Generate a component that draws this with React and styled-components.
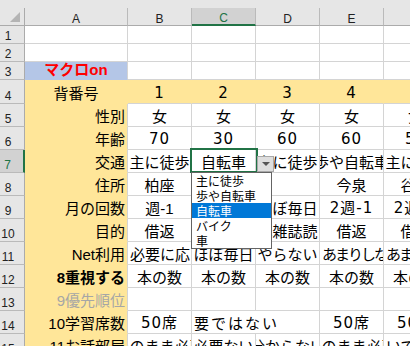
import React from "react";
import styled, { createGlobalStyle } from "styled-components";

const GRID = "#d4d4d4";
const YELLOW = "#ffe699";
const BLUE = "#b4c6e7";
const GREEN = "#217346";

const GlobalStyle = createGlobalStyle`
  html, body {
    margin: 0;
    padding: 0;
    background: #fff;
    overflow: hidden;
  }
`;

const Sheet = styled.div`
  width: 410px;
  height: 346px;
  overflow: hidden;
  background: #fff;
  font-family: "Liberation Sans", "Noto Sans CJK JP", sans-serif;
`;

const TopStrip = styled.div`
  height: 8px;
  background: #e6e6e6;
`;

const Grid = styled.div`
  display: grid;
  grid-template-columns: 25px 103px repeat(5, 64px);
  grid-template-rows: 18px 18px 18px 18px 24px repeat(11, 23px);
  width: 448px;
`;

const Corner = styled.div`
  box-sizing: border-box;
  display: flex;
  justify-content: flex-end;
  align-items: flex-end;
  padding: 0 4px 3px 0;
  background: #e6e6e6;
  border-right: 1px solid #ababab;
  border-bottom: 1px solid #ababab;
`;

const ColHead = styled.div`
  box-sizing: border-box;
  display: flex;
  justify-content: center;
  align-items: flex-end;
  background: ${(p) => (p.$active ? "#d2d2d2" : "#e6e6e6")};
  color: ${(p) => (p.$active ? GREEN : "#222")};
  border-right: 1px solid #bababa;
  border-bottom: ${(p) => (p.$active ? `2px solid ${GREEN}` : "1px solid #ababab")};
  font: 12px/12px "Liberation Sans", Arial, sans-serif;
`;

const RowHead = styled.div`
  box-sizing: border-box;
  display: flex;
  justify-content: center;
  align-items: flex-end;
  padding: 0 8px 1px 0;
  background: ${(p) => (p.$active ? "#d2d2d2" : "#e6e6e6")};
  color: ${(p) => (p.$active ? GREEN : "#222")};
  border-right: ${(p) => (p.$active ? `2px solid ${GREEN}` : "1px solid #ababab")};
  border-bottom: 1px solid #bababa;
  font: 12px/12px "Liberation Sans", Arial, sans-serif;
`;

const Cell = styled.div`
  position: relative;
  box-sizing: border-box;
  display: flex;
  min-width: 0;
  grid-column: span ${(p) => p.$span};
  background: ${(p) => p.$fill || "transparent"};
  border-right: 1px solid ${(p) => p.$rc};
  border-bottom: 1px solid ${(p) => p.$bc};
  color: ${(p) => p.$color};
  font-family: ${(p) =>
    p.$num ? '"DejaVu Sans", "Noto Sans CJK JP", sans-serif' : "inherit"};
  font-size: 15px;
  font-weight: ${(p) => (p.$bold ? 700 : 400)};
  letter-spacing: ${(p) => p.$spacing}px;
  z-index: ${(p) => (p.$active ? 2 : "auto")};
`;

const justify = { left: "flex-start", right: "flex-end", center: "center" };

const CellText = styled.div`
  flex: 1;
  min-width: 0;
  display: flex;
  justify-content: ${(p) => justify[p.$align]};
  align-items: flex-end;
  padding: 0 2px 1px;
  overflow: hidden;
  white-space: nowrap;
  line-height: 17px;
`;

const ActiveFrame = styled.div`
  position: absolute;
  left: -2px;
  top: -2px;
  width: 68px;
  height: 25px;
  box-sizing: border-box;
  border: 2px solid ${GREEN};
  pointer-events: none;
`;

const DropButton = styled.div`
  position: absolute;
  left: 65px;
  top: 6px;
  width: 17px;
  height: 16px;
  box-sizing: border-box;
  display: flex;
  justify-content: center;
  align-items: center;
  background: #dedede;
  border: 1px solid #a8a8a8;
`;

const Caret = styled.span`
  width: 0;
  height: 0;
  border-left: 4px solid transparent;
  border-right: 4px solid transparent;
  border-top: 4px solid #555;
`;

const DropList = styled.ul`
  position: absolute;
  left: -1px;
  top: 22px;
  width: 81px;
  margin: 0;
  padding: 0;
  list-style: none;
  box-sizing: border-box;
  background: #fff;
  border: 1px solid #646464;
  font: 12px/15px "Noto Sans CJK JP", sans-serif;
  font-weight: 400;
  letter-spacing: 0;
  color: #000;
`;

const DropItem = styled.li`
  height: 15px;
  padding-left: 4px;
  white-space: nowrap;
  overflow: hidden;
  background: ${(p) => (p.$selected ? "#0078d7" : "transparent")};
  color: ${(p) => (p.$selected ? "#fff" : "#000")};
`;

const A = (t, extra = {}) => ({ t, align: "right", ...extra });
const N = (t) => ({ t, num: true, spacing: 1 });
const L = (t, spacing = 0) => ({ t, align: "left", spacing });

const columns = ["A", "B", "C", "D", "E", "F"];

const sheet = [
  ["", "", "", "", "", ""],
  ["", "", "", "", "", ""],
  [{ t: "マクロon", bold: true, color: "#ff0000" }, "", "", "", "", ""],
  ["背番号", N("1"), N("2"), N("3"), N("4"), N("5")],
  [A("性別"), "女", "女", "女", "女", "女"],
  [A("年齢"), N("70"), N("30"), N("60"), N("60"), N("50")],
  [A("交通"), "主に徒歩", { t: "自転車", active: true }, "主に徒歩", "歩や自転車", "主に徒歩"],
  [A("住所"), "柏座", "今泉", "", "今泉", "谷津"],
  [A("月の回数"), "週-1", "ほぼ毎日", "ほぼ毎日", N("2週-1"), N("2週-1")],
  [A("目的"), "借返", "借返", "本雑誌読", "借返", "借返"],
  [A("Net利用"), L("必要に応じて"), "ほぼ毎日", "やらない", L("あまりしない", -2), L("あまりしない", -2)],
  [A("8重視する", { bold: true }), "本の数", "本の数", "本の数", "本の数", "本の数"],
  [A("9優先順位", { color: "#a6a6a6" }), "", "", "", "", ""],
  [
    A("10学習席数"),
    N("50席"),
    { t: "要ではない", align: "left", span: 2, spacing: 2 },
    null,
    N("50席"),
    N("50席"),
  ],
  [A("11お話部屋"), "そのまま必要", "必要ない", "分からない", "そのまま必要", L("いでいい")],
];

const choices = ["主に徒歩", "歩や自転車", "自転車", "バイク", "車"];

const fillOf = (row, col) => {
  if (row === 3 && col === 0) return BLUE;
  if (row === 4) return YELLOW;
  if (col === 0 && row >= 4) return YELLOW;
  return null;
};

const lineColor = (fill, neighbour) => (fill && neighbour ? fill : GRID);

const CornerMark = () => (
  <svg width="10" height="10" viewBox="0 0 10 10">
    <polygon points="10,0 10,10 0,10" fill="#b4b4b4" />
  </svg>
);

const Dropdown = () => (
  <>
    <ActiveFrame />
    <DropButton>
      <Caret />
    </DropButton>
    <DropList>
      {choices.map((c) => (
        <DropItem key={c} $selected={c === "自転車"}>
          {c}
        </DropItem>
      ))}
    </DropList>
  </>
);

const App = () => (
  <>
    <GlobalStyle />
    <Sheet>
      <TopStrip />
      <Grid>
        <Corner>
          <CornerMark />
        </Corner>
        {columns.map((c) => (
          <ColHead key={c} $active={c === "C"}>
            {c}
          </ColHead>
        ))}
        {sheet.map((cells, i) => {
          const row = i + 1;
          return (
            <React.Fragment key={row}>
              <RowHead $active={row === 7}>{row}</RowHead>
              {cells.map((raw, col) => {
                if (raw === null) return null;
                const cell = typeof raw === "string" ? { t: raw } : raw;
                const span = cell.span || 1;
                const fill = fillOf(row, col);
                return (
                  <Cell
                    key={col}
                    $span={span}
                    $fill={fill}
                    $rc={lineColor(fill, fillOf(row, col + span))}
                    $bc={lineColor(fill, fillOf(row + 1, col))}
                    $color={cell.color || "#000"}
                    $bold={cell.bold}
                    $num={cell.num}
                    $spacing={cell.spacing || 0}
                    $active={cell.active}
                  >
                    <CellText $align={cell.align || "center"}>{cell.t}</CellText>
                    {cell.active && <Dropdown />}
                  </Cell>
                );
              })}
            </React.Fragment>
          );
        })}
      </Grid>
    </Sheet>
  </>
);

export default App;
